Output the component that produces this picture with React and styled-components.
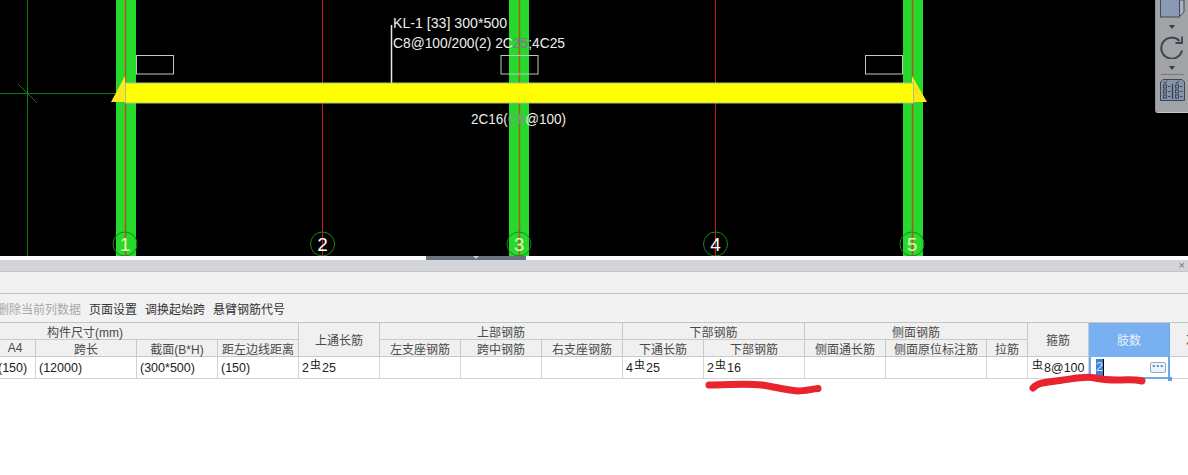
import React from 'react';
import styled, { createGlobalStyle } from 'styled-components';

const GlobalStyle = createGlobalStyle`
    html, body {
        margin: 0;
        padding: 0;
        background: #fff;
        overflow: hidden;
    }
`;

const Page = styled.div`
    position: relative;
    width: 1188px;
    height: 475px;
    overflow: hidden;
    background: #fff;
    font-family: "Liberation Sans", "Noto Sans CJK SC", sans-serif;
`;

const DrawingArea = styled.div`
    position: relative;
    height: 256px;
    background: #000;

    & > svg {
        display: block;
    }
`;

const SidePanel = styled.div`
    position: absolute;
    top: 0;
    right: 0;
    width: 33px;
    height: 113px;
    background: #a1a3a7;
    border-bottom-left-radius: 3px;
    border-bottom: 1px solid #c2c4c7;
    border-left: 1px solid #8f9195;
    box-sizing: border-box;
    display: flex;
    flex-direction: column;
    align-items: center;
`;

const Caret = styled.div`
    width: 0;
    height: 0;
    margin-top: 7px;
    border-left: 3.5px solid transparent;
    border-right: 3.5px solid transparent;
    border-top: 4px solid #3a3d44;
`;

const PanelIcon = styled.svg`
    display: block;
    flex: none;
    margin-top: ${p => p.$top || 0}px;
`;

const PanelDivider = styled.div`
    width: 23px;
    height: 1px;
    margin-top: 4px;
    background: #73767b;
`;

const Splitter = styled.div`
    height: 4px;
    padding-left: 426px;
    background: #fff;
`;

const SplitterHandle = styled.div`
    position: relative;
    width: 100px;
    height: 4px;
    background: #6c7380;

    &::after {
        content: '';
        position: absolute;
        left: 47px;
        top: 0;
        border-left: 3px solid transparent;
        border-right: 3px solid transparent;
        border-top: 3px solid #c9ccd2;
    }
`;

const TitleBar = styled.div`
    height: 11px;
    padding-right: 3px;
    background: #d2d4d9;
    border-bottom: 1px solid #c3c5c8;
    display: flex;
    align-items: center;
    justify-content: flex-end;
    color: #73767c;
    font-size: 11px;
    line-height: 11px;
`;

const EmptyBar = styled.div`
    height: 21px;
    background: #f0f0f0;
    border-bottom: 1px solid #c4c6c6;
`;

const Toolbar = styled.div`
    height: 28px;
    margin-left: -3px;
    background: #f2f2f2;
    display: flex;
    align-items: center;
    gap: 8px;
`;

const ToolButton = styled.span`
    font-size: 12px;
    color: ${p => (p.$disabled ? '#a8a8a8' : '#333')};
`;

const Sheet = styled.div`
    display: grid;
    margin-left: -128px;
    width: 1397px;
    grid-template-columns: 41px 41px 41px 41px 101px 81px 81px 81px 81px 81px 81px 81px 101px 81px 101px 41px 61px 81px 81px;
    grid-template-rows: 17px 17px 22px;
    border-top: 1px solid #c4c6c6;
`;

const HeadCell = styled.div`
    grid-column: span ${p => p.$cols || 1};
    grid-row: span ${p => p.$rows || 1};
    box-sizing: border-box;
    display: flex;
    align-items: center;
    justify-content: center;
    white-space: nowrap;
    font-size: 12px;
    color: ${p => (p.$active ? '#e8f1fc' : '#4a4a4a')};
    background: ${p => (p.$active ? '#78b0f2' : '#f0f0f0')};
    border-right: 1px solid ${p => (p.$active ? '#6ea6e8' : '#c8c9c9')};
    border-bottom: 1px solid ${p => (p.$active ? '#78b0f2' : '#c8c9c9')};
`;

const DataCell = styled.div`
    box-sizing: border-box;
    padding-left: 3px;
    display: flex;
    align-items: center;
    white-space: nowrap;
    font-size: 12.5px;
    color: #222;
    background: #fff;
    border-right: 1px solid #d2d3d3;
    border-bottom: 1px solid #d2d3d3;
`;

const Rebar = styled.span`
    font-size: 11px;
    line-height: 11px;
    margin: 0 1px;
    transform: translateY(-2px);
    color: #111;
`;

const EditCell = styled.div`
    position: relative;
    box-sizing: border-box;
    padding: 0 2px 0 5px;
    display: flex;
    align-items: center;
    justify-content: space-between;
    font-size: 12.5px;
    background: #fff;
    border: solid #6ea8e8;
    border-width: 0 2px 2px 2px;

    &::after {
        content: '';
        position: absolute;
        right: -4px;
        bottom: -4px;
        width: 4px;
        height: 4px;
        background: #5f9fe6;
    }
`;

const SelectedText = styled.span`
    width: 7px;
    line-height: 17px;
    color: #cfe2f8;
    background: #3f83d6;
    border-right: 1px solid #000;
`;

const EllipsisButton = styled.span`
    box-sizing: border-box;
    width: 16px;
    height: 11px;
    border: 1px solid #8ea9cb;
    border-radius: 2px;
    background: #edf3fa;
    color: #4c78ad;
    font-size: 12px;
    font-weight: bold;
    line-height: 7px;
    text-align: center;
`;

const Scribbles = styled.svg`
    position: absolute;
    inset: 0;
    pointer-events: none;
`;

const LABEL_FONT = '"Liberation Sans", sans-serif';

const gridAxes = [
    { n: 1, x: 125, left: 116 },
    { n: 2, x: 322.5 },
    { n: 3, x: 519, left: 509 },
    { n: 4, x: 715.5 },
    { n: 5, x: 912, left: 903 },
];

const seatBoxes = [136, 500.5, 865];

const headers = [
    { label: '构件尺寸(mm)', cols: 7 },
    { label: '上通长筋', rows: 2 },
    { label: '上部钢筋', cols: 3 },
    { label: '下部钢筋', cols: 2 },
    { label: '侧面钢筋', cols: 3 },
    { label: '箍筋', rows: 2 },
    { label: '肢数', rows: 2, active: true },
    { label: '次梁宽度', rows: 2 },
    { label: 'A1' },
    { label: 'A2' },
    { label: 'A3' },
    { label: 'A4' },
    { label: '跨长' },
    { label: '截面(B*H)' },
    { label: '距左边线距离' },
    { label: '左支座钢筋' },
    { label: '跨中钢筋' },
    { label: '右支座钢筋' },
    { label: '下通长筋' },
    { label: '下部钢筋' },
    { label: '侧面通长筋' },
    { label: '侧面原位标注筋' },
    { label: '拉筋' },
];

const bar = (count, rest) => <>{count}<Rebar>虫</Rebar>{rest}</>;

const row = [
    '', '', '', '(150)', '(12000)', '(300*500)', '(150)',
    bar('2', '25'), '', '', '',
    bar('4', '25'), bar('2', '16'),
    '', '', '',
    bar('', '8@100'),
];

const BeamDrawing = () => (
    <svg width="1188" height="256" viewBox="0 0 1188 256">
        {/* crosshair at the origin */}
        <g stroke="#127a12" strokeWidth="1">
            <line x1="0" y1="93.5" x2="116" y2="93.5" />
            <line x1="27.5" y1="0" x2="27.5" y2="256" />
            <line x1="18" y1="84" x2="37" y2="103" />
        </g>

        {gridAxes.map(a => a.left
            ? <rect key={a.n} x={a.left} y="0" width="20" height="256" fill="#26d92c" />
            : <line key={a.n} x1={a.x} y1="0" x2={a.x} y2="256" stroke="#d01818" />)}
        {gridAxes.filter(a => a.left).map(a => (
            <line key={a.n} x1={a.x + 0.5} y1="0" x2={a.x + 0.5} y2="256" stroke="#b4561c" strokeWidth="1.5" />
        ))}

        {seatBoxes.map(x => (
            <rect key={x} x={x + 0.5} y="55.5" width="37" height="18.5" fill="none" stroke="#c4c4c4" />
        ))}

        <line x1="391.5" y1="25" x2="391.5" y2="83" stroke="#e8e8e8" strokeWidth="1.5" />

        <polygon points="125,76 111,102 126,102" fill="#ffe81a" />
        <polygon points="912,76 927,102 912,102" fill="#ffe81a" />
        <rect x="125.5" y="83" width="788" height="20" fill="#ffff00" stroke="#a8c48c" />

        <g fontFamily={LABEL_FONT} fontSize="15" fill="#eee">
            <text x="393" y="28" textLength="114" lengthAdjust="spacingAndGlyphs">KL-1 [33] 300*500</text>
            <text x="393" y="48" textLength="172" lengthAdjust="spacingAndGlyphs">C8@100/200(2) 2C<tspan fill="#8d6f9a">25</tspan>;4C25</text>
            <text x="471" y="124" textLength="95" lengthAdjust="spacingAndGlyphs">2C16(<tspan fill="#7f9a8c">C8</tspan>@100)</text>
        </g>

        {gridAxes.map(a => (
            <g key={a.n}>
                <circle cx={a.x} cy="244" r="12" fill="none" stroke="#178a17" />
                <text
                    x={a.x}
                    y="250.5"
                    textAnchor="middle"
                    fontFamily={LABEL_FONT}
                    fontSize="19"
                    fill={a.left ? '#e6f5b8' : '#fff'}
                >
                    {a.n}
                </text>
            </g>
        ))}
    </svg>
);

const ViewPanel = () => (
    <SidePanel>
        <PanelIcon width="25" height="18" viewBox="0 0 25 18">
            <path d="M19 0 L24 0 L24 12 L19 17 Z" fill="#a9b3c4" stroke="#3f4a5c" />
            <rect x="0.5" y="-4" width="19" height="21" fill="#8a99b6" stroke="#3f4a5c" />
        </PanelIcon>
        <Caret />
        <PanelIcon $top={6} width="24" height="24" viewBox="0 0 24 24" fill="none" stroke="#3c4452" strokeWidth="2">
            <path d="M19.5 6 A10.5 10.5 0 1 0 22 15.5" />
            <path d="M22 1.5 V8 H15.5" strokeWidth="1.8" />
        </PanelIcon>
        <Caret />
        <PanelDivider />
        <PanelIcon $top={4} width="25" height="22" viewBox="0 0 25 22" fill="#8793a6" stroke="#333d50" strokeWidth="0.9">
            <path d="M3 .5 H22 L24.5 3 V21.5 H.5 V3 Z" />
            <path d="M12.5 5 V20" strokeWidth="1.3" />
            <path d="M4 3 l1 1.5 l2 -3 M16 3 l1 1.5 l2 -3" fill="none" />
            {[6, 11, 16].map(y => (
                <g key={y} fill="none">
                    <rect x="3.5" y={y} width="3" height="3" />
                    <rect x="15.5" y={y} width="3" height="3" />
                    <path d={`M8 ${y + 1.5} h2.5 M20 ${y + 1.5} h2.5`} />
                </g>
            ))}
        </PanelIcon>
    </SidePanel>
);

const App = () => (
    <Page>
        <GlobalStyle />
        <DrawingArea>
            <BeamDrawing />
            <ViewPanel />
        </DrawingArea>

        <Splitter>
            <SplitterHandle />
        </Splitter>
        <TitleBar>×</TitleBar>
        <EmptyBar />

        <Toolbar>
            <ToolButton $disabled>删除当前列数据</ToolButton>
            <ToolButton>页面设置</ToolButton>
            <ToolButton>调换起始跨</ToolButton>
            <ToolButton>悬臂钢筋代号</ToolButton>
        </Toolbar>

        <Sheet>
            {headers.map(h => (
                <HeadCell key={h.label} $cols={h.cols} $rows={h.rows} $active={h.active}>
                    {h.label}
                </HeadCell>
            ))}
            {row.map((value, i) => <DataCell key={i}>{value}</DataCell>)}
            <EditCell>
                <SelectedText>2</SelectedText>
                <EllipsisButton>···</EllipsisButton>
            </EditCell>
            <DataCell />
        </Sheet>

        <Scribbles width="1188" height="475" viewBox="0 0 1188 475" fill="none" stroke="#e8242c" strokeWidth="7" strokeLinecap="round" strokeLinejoin="round">
            <path d="M709 385 C730 385 745 383 762 385 C775 387 785 390 798 391 C805 391 812 389 818 388.5" />
            <path d="M1033 388 C1038 382 1048 382 1060 380.5 C1072 379 1082 376.5 1092 377.5 C1100 379 1108 380.5 1120 380 C1128 379.5 1136 379.5 1142 381" />
        </Scribbles>
    </Page>
);

export default App;
